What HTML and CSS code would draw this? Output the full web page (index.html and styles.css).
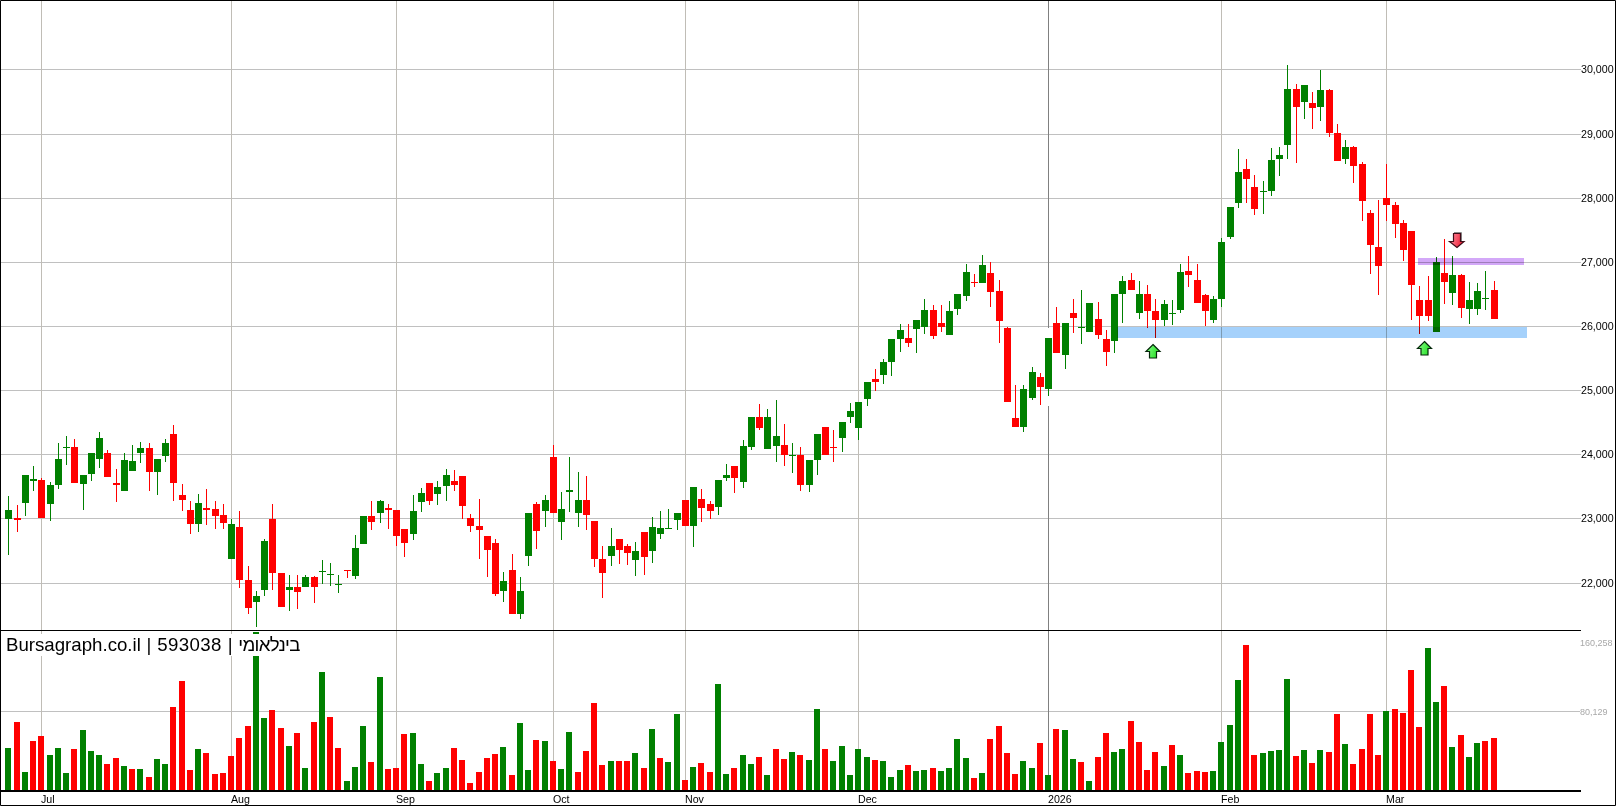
FILE: index.html
```html
<!DOCTYPE html>
<html lang="en">
<head>
<meta charset="utf-8">
<title>Bursagraph chart</title>
<link rel="stylesheet" href="styles.css">
</head>
<body>
<main class="chart">
<svg class="plot" viewBox="0 0 1616 806" width="1616" height="806" xmlns="http://www.w3.org/2000/svg">
<defs>
<linearGradient id="up" x1="0" y1="0" x2="1" y2="0.3"><stop offset="0" stop-color="#8cff8c"/><stop offset="1" stop-color="#28e028"/></linearGradient>
<linearGradient id="down" x1="0" y1="0" x2="1" y2="0.3"><stop offset="0" stop-color="#ff98a8"/><stop offset="1" stop-color="#f02038"/></linearGradient>
</defs>
<path class="grid-h" d="M1 69.5H1581M1 134.5H1581M1 198.5H1581M1 262.5H1581M1 326.5H1581M1 390.5H1581M1 454.5H1581M1 518.5H1581M1 583.5H1581M1 711.5H1580"/>
<path class="grid-v" d="M41.5 1V790M231.5 1V790M396.5 1V790M553.5 1V790M685.5 1V790M858.5 1V790M1221.5 1V790M1386.5 1V790"/>
<path class="grid-year" d="M1048.5 1V328M1048.5 406V790"/>

<path class="wick up-c" d="M8.5 496V555M25.5 475V516M33.5 466V491M50.5 482V521M58.5 443V489M66.5 436V465M83.5 475V510M91.5 453V481M99.5 432V468M124.5 453V491M132.5 445V471M140.5 442V463M157.5 459V495M165.5 439V462M198.5 494V532M231.5 519V559M256.5 591V627M264.5 539V596M289.5 575V611M305.5 575V587M322.5 560V584M330.5 563V586M338.5 575V593M355.5 535V579M363.5 516V544M380.5 500V523M413.5 495V540M421.5 488V512M437.5 481V505M446.5 469V501M503.5 572V602M520.5 577V619M528.5 513V566M545.5 495V527M561.5 492V540M569.5 457V512M578.5 472V527M611.5 528V566M635.5 542V576M652.5 517V563M660.5 511V539M668.5 509V529M677.5 513V530M693.5 487V547M718.5 480V515M726.5 464V481M743.5 440V488M751.5 417V450M767.5 409V449M776.5 400V462M792.5 443V473M809.5 460V492M817.5 434V475M842.5 422V452M850.5 403V423M858.5 402V440M867.5 382V406M883.5 359V384M891.5 339V376M900.5 324V352M916.5 320V353M924.5 299V334M949.5 301V335M957.5 294V315M966.5 264V301M982.5 255V283M1023.5 385V432M1032.5 367V400M1048.5 338V396M1065.5 323V369M1081.5 290V344M1089.5 303V332M1114.5 294V353M1122.5 276V323M1139.5 281V319M1164.5 300V326M1172.5 300V325M1180.5 264V313M1213.5 296V323M1221.5 238V307M1230.5 207V239M1238.5 149V208M1263.5 181V214M1271.5 148V196M1279.5 147V176M1287.5 65V159M1304.5 85V119M1320.5 70V121M1345.5 140V164M1436.5 257V332M1452.5 256V305M1469.5 282V324M1477.5 283V315M1485.5 271V310"/>
<path class="body up-c" d="M8.5 510V519M25.5 475V503M33.5 479V481M50.5 485V504M58.5 459V485M66.5 447V448M83.5 475V484M91.5 453V474M99.5 438V459M124.5 460V491M132.5 461V471M140.5 448V453M157.5 459V472M165.5 443V456M198.5 503V524M231.5 524V559M256.5 596V602M264.5 541V590M289.5 587V590M305.5 577V587M322.5 571V572M330.5 574V575M338.5 584V585M355.5 548V576M363.5 516V544M380.5 501V513M413.5 511V534M421.5 493V502M437.5 487V494M446.5 475V486M503.5 581V591M520.5 591V614M528.5 513V556M545.5 500V511M561.5 509V522M569.5 490V492M578.5 500V513M611.5 546V556M635.5 551V560M652.5 527V551M660.5 528V534M668.5 528V529M677.5 513V520M693.5 487V526M718.5 480V507M726.5 475V478M743.5 446V482M751.5 417V447M767.5 417V449M776.5 436V446M792.5 455V456M809.5 460V485M817.5 434V460M842.5 422V438M850.5 411V417M858.5 402V428M867.5 382V399M883.5 362V375M891.5 339V362M900.5 330V339M916.5 320V329M924.5 310V327M949.5 311V335M957.5 294V309M966.5 272V296M982.5 265V283M1023.5 389V427M1032.5 372V398M1048.5 338V389M1065.5 323V355M1081.5 327V328M1089.5 303V332M1114.5 294V341M1122.5 281V294M1139.5 294V313M1164.5 304V320M1172.5 313V314M1180.5 272V310M1213.5 299V320M1221.5 242V299M1230.5 207V237M1238.5 172V203M1263.5 191V192M1271.5 160V191M1279.5 155V159M1287.5 89V145M1304.5 85V102M1320.5 90V107M1345.5 147V159M1436.5 262V332M1452.5 275V293M1469.5 300V309M1477.5 291V309M1485.5 298V299"/>

<path class="wick down-c" d="M17.5 505V532M41.5 478V518M74.5 439V483M107.5 450V477M116.5 469V502M149.5 443V491M173.5 425V501M182.5 484V511M190.5 501V534M206.5 489V525M215.5 501V529M223.5 504V529M239.5 511V588M248.5 566V614M272.5 504V590M281.5 573V607M297.5 575V609M314.5 576V603M347.5 570V578M371.5 501V530M388.5 504V529M396.5 510V546M404.5 529V557M429.5 483V505M454.5 470V491M462.5 476V519M470.5 514V532M479.5 499V559M487.5 536V577M495.5 539V596M512.5 554V614M536.5 502V549M553.5 445V513M586.5 476V530M594.5 521V567M602.5 546V598M619.5 539V564M627.5 544V565M644.5 532V575M685.5 500V526M701.5 489V522M710.5 501V519M734.5 466V493M759.5 404V430M784.5 424V466M800.5 447V491M825.5 427V455M833.5 430V462M875.5 369V391M908.5 324V347M933.5 305V339M941.5 305V332M974.5 274V287M990.5 262V307M999.5 280V343M1007.5 327V402M1015.5 385V427M1040.5 373V405M1056.5 307V353M1073.5 299V333M1098.5 302V339M1106.5 330V366M1131.5 273V290M1147.5 285V328M1155.5 299V338M1188.5 256V287M1197.5 264V303M1205.5 294V326M1246.5 159V203M1254.5 175V215M1296.5 84V163M1312.5 92V129M1329.5 89V137M1337.5 124V161M1353.5 146V183M1362.5 162V221M1370.5 210V274M1378.5 200V295M1386.5 164V221M1395.5 202V238M1403.5 220V261M1411.5 231V320M1419.5 286V334M1428.5 276V321M1444.5 239V304M1461.5 274V318M1494.5 281V319"/>
<path class="body down-c" d="M17.5 518V520M41.5 480V518M74.5 447V483M107.5 453V477M116.5 483V485M149.5 448V472M173.5 434V483M182.5 495V500M190.5 510V524M206.5 508V510M215.5 509V516M223.5 515V523M239.5 527V580M248.5 580V608M272.5 519V573M281.5 573V607M297.5 587V592M314.5 577V587M347.5 570V571M371.5 516V522M388.5 508V510M396.5 510V536M404.5 529V543M429.5 483V501M454.5 481V485M462.5 476V506M470.5 518V526M479.5 526V530M487.5 536V550M495.5 543V594M512.5 570V614M536.5 504V531M553.5 457V513M586.5 500V515M594.5 521V559M602.5 559V573M619.5 539V550M627.5 546V553M644.5 532V557M685.5 500V526M701.5 499V508M710.5 504V511M734.5 466V478M759.5 417V428M784.5 445V455M800.5 455V485M825.5 427V455M833.5 447V448M875.5 379V382M908.5 338V343M933.5 310V336M941.5 323V327M974.5 282V283M990.5 273V292M999.5 291V321M1007.5 328V402M1015.5 418V427M1040.5 377V387M1056.5 323V353M1073.5 313V318M1098.5 319V335M1106.5 339V352M1131.5 280V290M1147.5 294V311M1155.5 311V320M1188.5 271V275M1197.5 280V303M1205.5 295V311M1246.5 169V179M1254.5 187V209M1296.5 89V107M1312.5 103V108M1329.5 90V133M1337.5 133V161M1353.5 147V166M1362.5 164V201M1370.5 213V245M1378.5 247V266M1386.5 198V205M1395.5 205V224M1403.5 223V250M1411.5 231V285M1419.5 300V316M1428.5 300V316M1444.5 273V282M1461.5 275V308M1494.5 290V319"/>

<rect class="zone-support" x="1117" y="327" width="410" height="11"/>
<rect class="zone-resistance" x="1418" y="258" width="106" height="7"/>

<path class="arrow-down-shadow" d="M1454 232.5H1461.5V241"/>
<path class="arrow-down" d="M1453.5 233.5H1460.5V241.5H1464L1457 247.5L1449.5 241.5H1453.5Z"/>
<path class="arrow-up" d="M1153 344.5L1160 351.5H1156.5V358H1149.5V351.5H1146Z"/>
<path class="arrow-up" d="M1424.5 341.5L1431.5 348.5H1428V355H1421V348.5H1417.5Z"/>

<path class="vol up-c" d="M8 790V748M25 790V772M50 790V755M58 790V748M66 790V773M83 790V730M91 790V751M99 790V755M124 790V766M140 790V769M157 790V759M165 790V764M198 790V749M256 790V632M264 790V718M289 790V746M305 790V768M322 790V672M347 790V781M355 790V767M363 790V726M380 790V677M413 790V733M421 790V764M437 790V773M446 790V768M503 790V747M520 790V723M528 790V770M545 790V741M561 790V769M569 790V732M611 790V761M635 790V753M652 790V729M668 790V762M677 790V714M693 790V767M718 790V684M726 790V774M743 790V755M751 790V764M767 790V775M792 790V752M809 790V760M817 790V709M833 790V761M842 790V746M850 790V775M858 790V749M867 790V757M883 790V761M891 790V777M900 790V770M916 790V771M924 790V770M941 790V771M949 790V768M957 790V739M966 790V758M982 790V773M1023 790V761M1032 790V768M1048 790V775M1065 790V730M1073 790V759M1089 790V781M1114 790V752M1122 790V749M1164 790V766M1180 790V755M1213 790V771M1221 790V742M1230 790V725M1238 790V680M1263 790V753M1271 790V751M1279 790V750M1287 790V679M1304 790V750M1320 790V750M1345 790V744M1386 790V711M1428 790V648M1436 790V702M1452 790V747M1469 790V757M1477 790V743"/>
<path class="vol down-c" d="M17 790V722M33 790V741M41 790V736M74 790V749M107 790V764M116 790V758M132 790V769M149 790V777M173 790V707M182 790V681M190 790V770M206 790V753M215 790V774M223 790V773M231 790V756M239 790V738M248 790V726M272 790V710M281 790V728M297 790V733M314 790V722M330 790V717M338 790V748M371 790V762M388 790V769M396 790V768M404 790V734M429 790V781M454 790V748M462 790V760M470 790V783M479 790V772M487 790V758M495 790V754M512 790V775M536 790V740M553 790V761M578 790V772M586 790V751M594 790V703M602 790V765M619 790V761M627 790V761M644 790V768M660 790V758M685 790V780M701 790V763M710 790V772M734 790V768M759 790V757M776 790V749M784 790V759M800 790V755M825 790V749M875 790V760M908 790V765M933 790V768M974 790V778M990 790V739M999 790V726M1007 790V753M1015 790V774M1040 790V743M1056 790V729M1081 790V762M1098 790V757M1106 790V733M1131 790V721M1139 790V742M1147 790V770M1155 790V752M1172 790V745M1188 790V773M1197 790V771M1205 790V772M1246 790V645M1254 790V755M1296 790V756M1312 790V763M1329 790V752M1337 790V714M1353 790V764M1362 790V749M1370 790V714M1378 790V755M1395 790V709M1403 790V713M1411 790V670M1419 790V727M1444 790V686M1461 790V735M1485 790V741M1494 790V738"/>

<path class="divider" d="M1 630.5H1581"/>
<path class="axis" d="M1 791H1581"/>
<path class="frame" d="M.5 .5H1615.5V805.5H.5Z"/>

<g class="label-price">
<text x="1581" y="73">30,000</text>
<text x="1581" y="138">29,000</text>
<text x="1581" y="202">28,000</text>
<text x="1581" y="266">27,000</text>
<text x="1581" y="330">26,000</text>
<text x="1581" y="394">25,000</text>
<text x="1581" y="458">24,000</text>
<text x="1581" y="522">23,000</text>
<text x="1581" y="587">22,000</text>
</g>
<g class="label-volume">
<text x="1580" y="646">160,258</text>
<text x="1580" y="714.500">80,129</text>
</g>
<g class="label-time">
<text x="41" y="803">Jul</text>
<text x="231" y="803">Aug</text>
<text x="396" y="803">Sep</text>
<text x="553" y="803">Oct</text>
<text x="685" y="803">Nov</text>
<text x="858" y="803">Dec</text>
<text x="1048" y="803">2026</text>
<text x="1221" y="803">Feb</text>
<text x="1386" y="803">Mar</text>
</g>
</svg>
<div class="watermark" dir="ltr">Bursagraph.co.il | <span class="wm-id">593038</span> | <span class="wm-name">בינלאומי</span></div>
</main>
</body>
</html>
```

FILE: styles.css
```css
html, body {
  margin: 0;
  padding: 0;
  background: #fff;
}
body {
  width: 1616px;
  height: 806px;
  overflow: hidden;
}
.chart {
  position: relative;
  width: 1616px;
  height: 806px;
  background: #fff;
  font-family: "Liberation Sans", Arial, sans-serif;
}
.plot {
  display: block;
}
.plot path {
  fill: none;
}
.grid-h {
  stroke: #c0c0c0;
  stroke-width: 1;
}
.grid-v {
  stroke: #c0bdb6;
  stroke-width: 1;
}
.grid-year {
  stroke: #808080;
  stroke-width: 1;
}
.wick {
  stroke-width: 1;
}
.body {
  stroke-width: 7;
}
.vol {
  stroke-width: 6;
}
.up-c {
  stroke: #008000;
}
.down-c {
  stroke: #ff0000;
}
.zone-support {
  fill: #a5d1fb;
  mix-blend-mode: multiply;
}
.zone-resistance {
  fill: #d3a8f8;
  mix-blend-mode: multiply;
}
.plot .arrow-up {
  fill: url(#up);
  stroke: #04280a;
  stroke-width: 1.2;
}
.plot .arrow-down {
  fill: url(#down);
  stroke: #400c18;
  stroke-width: 1.2;
}
.arrow-down-shadow {
  stroke: #8a8a8a;
  stroke-width: 1;
}
.divider {
  stroke: #000;
  stroke-width: 1;
}
.axis {
  stroke: #000;
  stroke-width: 2;
}
.frame {
  stroke: #000;
  stroke-width: 1;
}
.label-price,
.label-time {
  font-size: 10.67px;
  fill: #000;
}
.label-volume {
  font-size: 9px;
  fill: #a8a8a8;
}
.watermark {
  position: absolute;
  left: 1px;
  top: 634px;
  width: 299px;
  height: 22px;
  padding-left: 5px;
  box-sizing: border-box;
  background: #fff;
  color: #000;
  font-size: 18.67px;
  line-height: 22px;
  white-space: nowrap;
  word-spacing: 0.6px;
}
.wm-id {
  letter-spacing: 0.4px;
}
.wm-name {
  letter-spacing: -0.7px;
}
```
